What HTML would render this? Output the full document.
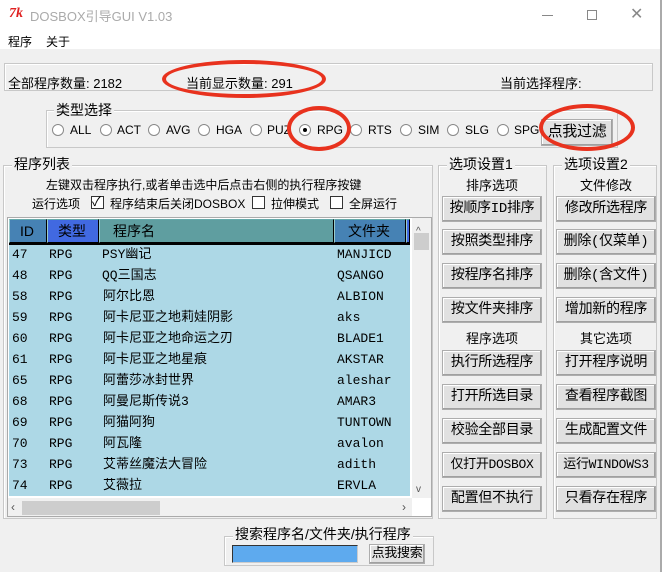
<!DOCTYPE html>
<html><head><meta charset="utf-8"><style>
*{margin:0;padding:0;box-sizing:border-box}
body{width:662px;height:572px;background:#f0f0f0;position:relative;overflow:hidden;font-family:"Liberation Sans","Noto Sans CJK SC",sans-serif;font-size:12px;color:#000}
.a{position:absolute;white-space:nowrap}
.gb{position:absolute;border:1px solid #c8c8c8;box-shadow:1px 1px 0 #fff inset}
.lg{position:absolute;background:#f0f0f0;padding:0 2px;font-size:14px;line-height:16px;white-space:nowrap}
.btn{position:absolute;width:100px;height:26px;background:#e1e1e1;border:1px solid #adadad;box-shadow:inset -1px -1px 0 #a0a0a0,inset 1px 1px 0 #fff;font-size:14px;line-height:24px;text-align:center;white-space:nowrap;font-family:"Liberation Mono","Noto Sans CJK SC",monospace;letter-spacing:-0.3px}
.rad{position:absolute;width:12px;height:12px;border:1px solid #888;border-radius:50%;background:#fff}
.rl{position:absolute;font-size:12px;line-height:14px}
.cb{position:absolute;width:13px;height:13px;border:1px solid #333;background:#fff}
.row{position:absolute;left:11px;height:21px;line-height:21px;font-size:13px;font-family:"Liberation Mono","Noto Sans CJK SC",monospace}
.row span{position:absolute;white-space:nowrap}
.hd{position:absolute;top:219px;height:24px;line-height:22px;font-size:14px;border:1px solid #000;border-top-color:#6aa;border-left-color:#9cc}
.ell{position:absolute;border:4px solid #e8321e;border-radius:50%}
</style></head><body>
<div class="a" style="left:0;top:0;width:662px;height:49px;background:#fff"></div>
<div class="a" style="left:660px;top:0;width:2px;height:572px;background:#aaa"></div>
<div class="a" style="left:9px;top:6px;color:#e02020;font-weight:bold;font-style:italic;font-size:14px;font-family:'Liberation Serif',serif">7k</div>
<div class="a" style="left:30px;top:6px;font-size:13px;color:#aaa">DOSBOX引导GUI V1.03</div>
<div class="a" style="left:542px;top:15px;width:11px;height:1px;background:#888"></div>
<div class="a" style="left:587px;top:10px;width:10px;height:10px;border:1px solid #888"></div>
<div class="a" style="left:630px;top:4px;font-size:16px;color:#888">✕</div>
<div class="a" style="left:8px;top:33px;font-size:12px">程序</div>
<div class="a" style="left:46px;top:33px;font-size:12px">关于</div>
<div class="gb" style="left:4px;top:63px;width:649px;height:28px"></div>
<div class="a" style="left:8px;top:73px;font-size:13px">全部程序数量: 2182</div>
<div class="a" style="left:186px;top:73px;font-size:13px">当前显示数量: 291</div>
<div class="a" style="left:500px;top:73px;font-size:13px">当前选择程序:</div>
<div class="gb" style="left:46px;top:110px;width:572px;height:38px"></div>
<div class="lg" style="left:54px;top:102px">类型选择</div>
<div class="rad" style="left:52px;top:124px"></div><div class="rl" style="left:70px;top:123px">ALL</div>
<div class="rad" style="left:100px;top:124px"></div><div class="rl" style="left:117px;top:123px">ACT</div>
<div class="rad" style="left:148px;top:124px"></div><div class="rl" style="left:166px;top:123px">AVG</div>
<div class="rad" style="left:198px;top:124px"></div><div class="rl" style="left:216px;top:123px">HGA</div>
<div class="rad" style="left:250px;top:124px"></div><div class="rl" style="left:267px;top:123px">PUZ</div>
<div class="rad" style="left:299px;top:124px"></div><div class="a" style="left:303px;top:128px;width:4px;height:4px;background:#000;border-radius:50%"></div><div class="rl" style="left:317px;top:123px">RPG</div>
<div class="rad" style="left:350px;top:124px"></div><div class="rl" style="left:368px;top:123px">RTS</div>
<div class="rad" style="left:400px;top:124px"></div><div class="rl" style="left:418px;top:123px">SIM</div>
<div class="rad" style="left:447px;top:124px"></div><div class="rl" style="left:465px;top:123px">SLG</div>
<div class="rad" style="left:497px;top:124px"></div><div class="rl" style="left:514px;top:123px">SPG</div>
<div class="btn" style="left:541px;top:119px;width:72px;height:27px;line-height:25px;font-size:15px">点我过滤</div>
<div class="gb" style="left:3px;top:165px;width:430px;height:354px"></div>
<div class="lg" style="left:12px;top:156px">程序列表</div>
<div class="a" style="left:46px;top:176px">左键双击程序执行,或者单击选中后点击右侧的执行程序按键</div>
<div class="a" style="left:32px;top:195px">运行选项</div>
<div class="cb" style="left:91px;top:196px"></div><div class="a" style="left:92px;top:191px;font-size:13px">✓</div>
<div class="a" style="left:110px;top:195px">程序结束后关闭DOSBOX</div>
<div class="cb" style="left:252px;top:196px"></div><div class="a" style="left:271px;top:195px">拉伸模式</div>
<div class="cb" style="left:330px;top:196px"></div><div class="a" style="left:349px;top:195px">全屏运行</div>
<div class="a" style="left:7px;top:217px;width:425px;height:300px;background:#fff;border:1px solid #aaa"></div>
<div class="a" style="left:9px;top:244px;width:401px;height:252px;background:#add8e6"></div>
<div class="hd" style="left:9px;width:38px;background:#4682b4;padding-left:10px">ID</div>
<div class="hd" style="left:47px;width:52px;background:#4169e1;padding-left:10px">类型</div>
<div class="hd" style="left:99px;width:235px;background:#5f9ea0;padding-left:13px">程序名</div>
<div class="hd" style="left:334px;width:72px;background:#4682b4;padding-left:13px">文件夹</div>
<div class="hd" style="left:406px;width:4px;background:#4169e1"></div>
<div class="a" style="left:9px;top:243px;width:401px;height:2px;background:#000"></div>
<div class="row" style="top:244px"><span style="left:1px">47</span><span style="left:38px">RPG</span><span style="left:91px">PSY幽记</span><span style="left:326px">MANJICD</span></div>
<div class="row" style="top:265px"><span style="left:1px">48</span><span style="left:38px">RPG</span><span style="left:91px">QQ三国志</span><span style="left:326px">QSANGO</span></div>
<div class="row" style="top:286px"><span style="left:1px">58</span><span style="left:38px">RPG</span><span style="left:92px">阿尔比恩</span><span style="left:326px">ALBION</span></div>
<div class="row" style="top:307px"><span style="left:1px">59</span><span style="left:38px">RPG</span><span style="left:92px">阿卡尼亚之地莉娃阴影</span><span style="left:326px">aks</span></div>
<div class="row" style="top:328px"><span style="left:1px">60</span><span style="left:38px">RPG</span><span style="left:92px">阿卡尼亚之地命运之刃</span><span style="left:326px">BLADE1</span></div>
<div class="row" style="top:349px"><span style="left:1px">61</span><span style="left:38px">RPG</span><span style="left:92px">阿卡尼亚之地星痕</span><span style="left:326px">AKSTAR</span></div>
<div class="row" style="top:370px"><span style="left:1px">65</span><span style="left:38px">RPG</span><span style="left:92px">阿蕾莎冰封世界</span><span style="left:326px">aleshar</span></div>
<div class="row" style="top:391px"><span style="left:1px">68</span><span style="left:38px">RPG</span><span style="left:92px">阿曼尼斯传说3</span><span style="left:326px">AMAR3</span></div>
<div class="row" style="top:412px"><span style="left:1px">69</span><span style="left:38px">RPG</span><span style="left:92px">阿猫阿狗</span><span style="left:326px">TUNTOWN</span></div>
<div class="row" style="top:433px"><span style="left:1px">70</span><span style="left:38px">RPG</span><span style="left:92px">阿瓦隆</span><span style="left:326px">avalon</span></div>
<div class="row" style="top:454px"><span style="left:1px">73</span><span style="left:38px">RPG</span><span style="left:92px">艾蒂丝魔法大冒险</span><span style="left:326px">adith</span></div>
<div class="row" style="top:475px"><span style="left:1px">74</span><span style="left:38px">RPG</span><span style="left:92px">艾薇拉</span><span style="left:326px">ERVLA</span></div>
<div class="a" style="left:412px;top:218px;width:19px;height:280px;background:#f0f0f0"></div>
<div class="a" style="left:416px;top:226px;font-size:10px;color:#555">^</div>
<div class="a" style="left:414px;top:233px;width:15px;height:17px;background:#cdcdcd"></div>
<div class="a" style="left:416px;top:484px;font-size:10px;color:#555">v</div>
<div class="a" style="left:8px;top:498px;width:404px;height:18px;background:#f0f0f0"></div>
<div class="a" style="left:11px;top:500px;font-size:12px;color:#555">‹</div>
<div class="a" style="left:22px;top:501px;width:138px;height:14px;background:#cdcdcd"></div>
<div class="a" style="left:402px;top:500px;font-size:12px;color:#555">›</div>
<div class="gb" style="left:438px;top:165px;width:109px;height:354px"></div>
<div class="lg" style="left:447px;top:156px">选项设置1</div>
<div class="a" style="left:466px;top:175px;font-size:13px">排序选项</div>
<div class="btn" style="left:442px;top:196px">按顺序ID排序</div>
<div class="btn" style="left:442px;top:229px">按照类型排序</div>
<div class="btn" style="left:442px;top:263px">按程序名排序</div>
<div class="btn" style="left:442px;top:297px">按文件夹排序</div>
<div class="a" style="left:466px;top:328px;font-size:13px">程序选项</div>
<div class="btn" style="left:442px;top:350px">执行所选程序</div>
<div class="btn" style="left:442px;top:384px">打开所选目录</div>
<div class="btn" style="left:442px;top:418px">校验全部目录</div>
<div class="btn" style="left:442px;top:452px;font-size:13px">仅打开DOSBOX</div>
<div class="btn" style="left:442px;top:486px">配置但不执行</div>
<div class="gb" style="left:553px;top:165px;width:104px;height:354px"></div>
<div class="lg" style="left:562px;top:156px">选项设置2</div>
<div class="a" style="left:580px;top:175px;font-size:13px">文件修改</div>
<div class="btn" style="left:556px;top:196px">修改所选程序</div>
<div class="btn" style="left:556px;top:229px">删除(仅菜单)</div>
<div class="btn" style="left:556px;top:263px">删除(含文件)</div>
<div class="btn" style="left:556px;top:297px">增加新的程序</div>
<div class="a" style="left:580px;top:328px;font-size:13px">其它选项</div>
<div class="btn" style="left:556px;top:350px">打开程序说明</div>
<div class="btn" style="left:556px;top:384px">查看程序截图</div>
<div class="btn" style="left:556px;top:418px">生成配置文件</div>
<div class="btn" style="left:556px;top:452px;font-size:13px">运行WINDOWS3</div>
<div class="btn" style="left:556px;top:486px">只看存在程序</div>
<div class="gb" style="left:224px;top:536px;width:210px;height:30px"></div>
<div class="lg" style="left:233px;top:526px">搜索程序名/文件夹/执行程序</div>
<div class="a" style="left:232px;top:545px;width:126px;height:18px;background:#5eaaee;border:1px solid #333;border-right-color:#ccc;border-bottom-color:#ccc"></div>
<div class="btn" style="left:369px;top:544px;width:56px;height:20px;line-height:18px;font-size:13px">点我搜索</div>
<div class="ell" style="left:162px;top:60px;width:164px;height:38px"></div>
<div class="ell" style="left:287px;top:106px;width:64px;height:45px"></div>
<div class="ell" style="left:539px;top:104px;width:96px;height:47px"></div>
</body></html>
